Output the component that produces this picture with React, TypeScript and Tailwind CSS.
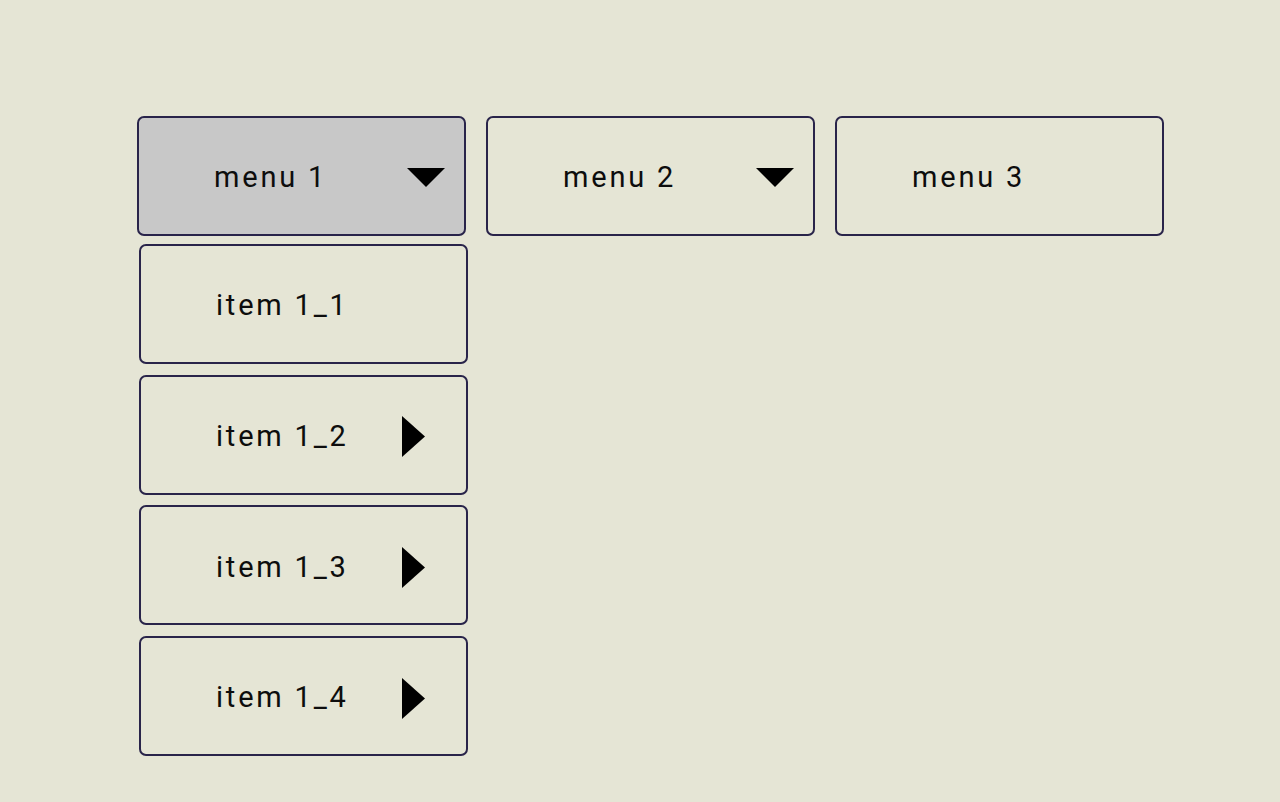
import React from 'react';

const font = { fontFamily: 'Roboto, "Liberation Sans", sans-serif' };

const DownArrow = () => (
  <svg width="38" height="19" viewBox="0 0 38 19" className="ml-auto mr-[19px] mt-[2px]">
    <polygon points="0,0 38,0 19,19" fill="#000" />
  </svg>
);

const RightArrow = () => (
  <svg width="23" height="41" viewBox="0 0 23 41" className="ml-auto mr-[41px] mt-[4px]">
    <polygon points="0,0 23,20.5 0,41" fill="#000" />
  </svg>
);

const Menu = ({ label, active, arrow }: { label: string; active?: boolean; arrow?: boolean }) => (
  <div
    className={`flex items-center w-[329px] h-[120px] rounded-[7px] border-2 border-[#29244a] pl-[75px] ${
      active ? 'bg-[#c8c8c8]' : 'bg-[#e5e5d5]'
    }`}
  >
    <span className="pt-[4px] text-[29px] tracking-[2.8px] text-[#0d0d0d]">{label}</span>
    {arrow && <DownArrow />}
  </div>
);

const Item = ({ label, arrow }: { label: string; arrow?: boolean }) => (
  <div className="flex items-center w-[329px] h-[120px] rounded-[7px] border-2 border-[#29244a] pl-[75px]">
    <span className="pt-[4px] text-[29px] tracking-[2.8px] text-[#0d0d0d]">{label}</span>
    {arrow && <RightArrow />}
  </div>
);

export default function App() {
  return (
    <div className="w-full min-h-[802px] bg-[#e5e5d5] pt-[116px] pl-[137px]" style={font}>
      <div className="flex gap-[20px]">
        <Menu label="menu 1" active arrow />
        <Menu label="menu 2" arrow />
        <Menu label="menu 3" />
      </div>
      <div className="flex flex-col gap-[10.7px] mt-[8px] ml-[2px]">
        <Item label="item 1_1" />
        <Item label="item 1_2" arrow />
        <Item label="item 1_3" arrow />
        <Item label="item 1_4" arrow />
      </div>
    </div>
  );
}
